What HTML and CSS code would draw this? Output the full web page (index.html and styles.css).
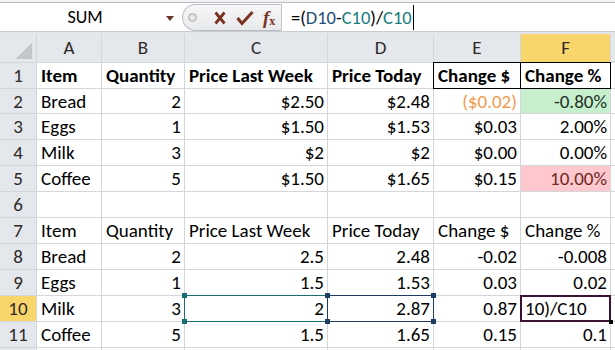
FILE: index.html
```html
<!DOCTYPE html>
<html>
<head>
    <title>Grocery Prices</title>
    <link rel="stylesheet" href="styles.css">
</head>
<body>
    <div class="ribbon-edge"></div>

    <div class="formula-bar">
        <div class="name-box">
            <span class="name">SUM</span>
            <span class="caret"></span>
        </div>
        <div class="fx-tools">
            <span class="grip"></span>
            <svg class="tool" width="14" height="16" viewBox="0 0 14 16">
                <path d="M2.5 2.5 L11.5 13.5 M11.5 2.5 L2.5 13.5" stroke="#7a3321" stroke-width="2.8" fill="none"/>
            </svg>
            <svg class="tool" width="18" height="16" viewBox="0 0 18 16">
                <path d="M1.5 8 L6 13.5 L16.5 2" stroke="#7a3321" stroke-width="3" fill="none"/>
            </svg>
            <span class="fx"><i>f</i><sub>x</sub></span>
        </div>
        <div class="formula">=(<span class="ref-d">D10</span>-<span class="ref-c">C10</span>)/<span class="ref-c">C10</span><span class="cursor"></span></div>
    </div>

    <div class="sheet">
        <!-- column headers -->
        <div class="h corner"><span class="tri"></span></div>
        <div class="h">A</div>
        <div class="h">B</div>
        <div class="h">C</div>
        <div class="h">D</div>
        <div class="h">E</div>
        <div class="h sel">F</div>
        <div class="h"></div>

        <!-- first table, formatted -->
        <div class="h">1</div>
        <div class="c b">Item</div>
        <div class="c b">Quantity</div>
        <div class="c b">Price Last Week</div>
        <div class="c b">Price Today</div>
        <div class="c b boxed">Change $</div>
        <div class="c b boxed">Change %</div>
        <div class="c"></div>

        <div class="h">2</div>
        <div class="c">Bread</div>
        <div class="c n">2</div>
        <div class="c n">$2.50</div>
        <div class="c n">$2.48</div>
        <div class="c n neg">($0.02)</div>
        <div class="c n good">-0.80%</div>
        <div class="c"></div>

        <div class="h">3</div>
        <div class="c">Eggs</div>
        <div class="c n">1</div>
        <div class="c n">$1.50</div>
        <div class="c n">$1.53</div>
        <div class="c n">$0.03</div>
        <div class="c n">2.00%</div>
        <div class="c"></div>

        <div class="h">4</div>
        <div class="c">Milk</div>
        <div class="c n">3</div>
        <div class="c n">$2</div>
        <div class="c n">$2</div>
        <div class="c n">$0.00</div>
        <div class="c n">0.00%</div>
        <div class="c"></div>

        <div class="h">5</div>
        <div class="c">Coffee</div>
        <div class="c n">5</div>
        <div class="c n">$1.50</div>
        <div class="c n">$1.65</div>
        <div class="c n">$0.15</div>
        <div class="c n bad">10.00%</div>
        <div class="c"></div>

        <div class="h">6</div>
        <div class="c"></div>
        <div class="c"></div>
        <div class="c"></div>
        <div class="c"></div>
        <div class="c"></div>
        <div class="c"></div>
        <div class="c"></div>

        <!-- second table, raw values -->
        <div class="h">7</div>
        <div class="c">Item</div>
        <div class="c">Quantity</div>
        <div class="c">Price Last Week</div>
        <div class="c">Price Today</div>
        <div class="c">Change $</div>
        <div class="c">Change %</div>
        <div class="c"></div>

        <div class="h">8</div>
        <div class="c">Bread</div>
        <div class="c n">2</div>
        <div class="c n">2.5</div>
        <div class="c n">2.48</div>
        <div class="c n">-0.02</div>
        <div class="c n">-0.008</div>
        <div class="c"></div>

        <div class="h">9</div>
        <div class="c">Eggs</div>
        <div class="c n">1</div>
        <div class="c n">1.5</div>
        <div class="c n">1.53</div>
        <div class="c n">0.03</div>
        <div class="c n">0.02</div>
        <div class="c"></div>

        <div class="h sel">10</div>
        <div class="c">Milk</div>
        <div class="c n">3</div>
        <div class="c n ref-box teal">2
            <span class="knob tl"></span><span class="knob bl"></span>
        </div>
        <div class="c n ref-box navy">2.87
            <span class="knob tl"></span><span class="knob tr"></span>
            <span class="knob bl"></span><span class="knob br"></span>
        </div>
        <div class="c n">0.87</div>
        <div class="c editing">10)/C10<span class="fill-handle"></span></div>
        <div class="c"></div>

        <div class="h">11</div>
        <div class="c">Coffee</div>
        <div class="c n">5</div>
        <div class="c n">1.5</div>
        <div class="c n">1.65</div>
        <div class="c n">0.15</div>
        <div class="c n">0.1</div>
        <div class="c"></div>

        <!-- row 12 only shows a sliver -->
        <div class="h"></div>
        <div class="c"></div>
        <div class="c"></div>
        <div class="c"></div>
        <div class="c"></div>
        <div class="c"></div>
        <div class="c"></div>
        <div class="c"></div>
    </div>
</body>
</html>
```

FILE: styles.css
```css
body {
    margin: 0;
    background-color: #e3e6ea;
    font-family: "Carlito", "Lato", "Liberation Sans", sans-serif;
    color: #000;
    overflow: hidden;
    width: 615px;
    height: 350px;
}

.ribbon-edge {
    height: 2px;
    background-color: #f1f2f4;
    border-bottom: 1px solid #b9bdc3;
}

/* formula bar */

.formula-bar {
    display: flex;
    height: 28px;
    background-color: #fff;
    border-bottom: 1px solid #c8ccd1;
    margin-bottom: 2px;
}

.name-box {
    width: 182px;
    display: flex;
    align-items: center;
    font-size: 18px;
}

.name {
    flex: 1;
    text-align: center;
    padding-left: 4px;
}

.caret {
    width: 0;
    height: 0;
    border-left: 4px solid transparent;
    border-right: 4px solid transparent;
    border-top: 5px solid #6a3524;
    margin: 2px 8px 0 0;
}

.fx-tools {
    width: 100px;
    display: flex;
    align-items: center;
    background: linear-gradient(#f7f7f8, #e8e9eb);
    border: 1px solid #b9bdc3;
    border-right-color: #c4c8cd;
    border-radius: 14px 0 0 14px;
    margin-top: 1px;
    box-sizing: border-box;
}

.grip {
    width: 7px;
    height: 7px;
    border-radius: 50%;
    background: radial-gradient(#f4f4f4, #c9c9c9);
    border: 1px solid #b3b3b3;
    margin: 0 16px 0 5px;
}

.tool {
    margin-right: 9px;
}

.fx {
    font-family: "Liberation Serif", serif;
    font-size: 19px;
    color: #7a3321;
    font-weight: bold;
    line-height: 1;
}

.fx sub {
    font-size: 12px;
    vertical-align: -1px;
}

.formula {
    flex: 1;
    display: flex;
    align-items: center;
    padding-left: 9px;
    font-size: 18.5px;
}

.ref-d {
    color: #1f4e79;
}

.ref-c {
    color: #167c7c;
}

.cursor {
    width: 1px;
    height: 25px;
    background-color: #000;
    margin-left: 1px;
}

/* grid */

.sheet {
    display: grid;
    grid-template-columns: 36px 64px 82px 142px 105px 86px 89px 20px;
    grid-template-rows: 28px 25px 24px;
    grid-auto-rows: 25px;
    gap: 1px;
    background-color: #d4d6d9;
    font-size: 19px;
}

.h {
    background-color: #e4e7eb;
    color: #2f2a28;
    text-align: center;
    line-height: 28px;
}

.sheet > .h:nth-child(n+9) {
    line-height: 25px;
}

.h.sel {
    background-color: #f9d66b;
}

.corner {
    display: flex;
    justify-content: flex-end;
    align-items: flex-end;
    padding: 0 4px 3px 0;
}

.tri {
    width: 17px;
    height: 16px;
    background: linear-gradient(to bottom right, transparent 50%, #c3c6ca 50%);
}

.c {
    background-color: #fff;
    line-height: 25px;
    padding: 0 3px 0 4px;
    white-space: nowrap;
    position: relative;
}

.b {
    font-weight: bold;
}

.n {
    text-align: right;
}

.boxed {
    outline: 1px solid #000;
}

.neg {
    color: #f29a4e;
}

.good {
    background-color: #c6efce;
    color: #1f2f1f;
}

.bad {
    background-color: #ffc7ce;
    color: #6e2a22;
}

/* formula references and active cell */

.ref-box.teal {
    outline: 1px solid #17706f;
}

.ref-box.navy {
    outline: 1px solid #1f3c64;
    z-index: 1;
}

.knob {
    position: absolute;
    width: 5px;
    height: 5px;
    z-index: 2;
}

.teal .knob {
    background-color: #17706f;
}

.navy .knob {
    background-color: #1f3c64;
}

.knob.tl { top: -3px; left: -3px; }
.knob.tr { top: -3px; right: -3px; }
.knob.bl { bottom: -3px; left: -3px; }
.knob.br { bottom: -3px; right: -3px; }

.editing {
    outline: 2px solid #3b1233;
    outline-offset: -1px;
    z-index: 1;
}

.fill-handle {
    position: absolute;
    right: -3px;
    bottom: -3px;
    width: 4px;
    height: 4px;
    background-color: #000;
}
```
